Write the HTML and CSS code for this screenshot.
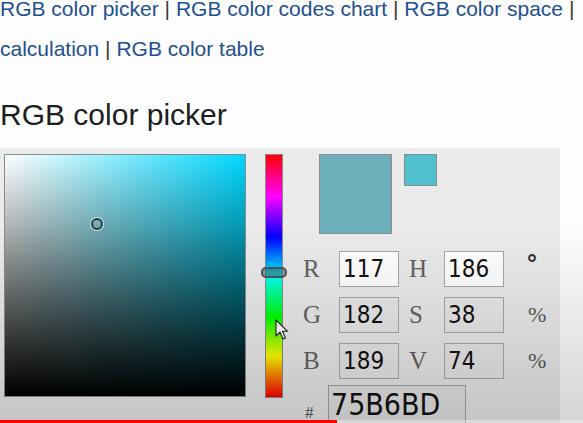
FILE: index.html
```html
<!DOCTYPE html>
<html lang="en">
<head>
<meta charset="utf-8">
<title>RGB color picker</title>
<link rel="stylesheet" href="styles.css">
</head>
<body>
<nav class="links">
  <p class="links-line"><a href="#">RGB color picker</a> <span class="sep">|</span> <a href="#">RGB color codes chart</a> <span class="sep">|</span> <a href="#">RGB color space</a> <span class="sep">|</span></p>
  <p class="links-line"><a href="#">calculation</a> <span class="sep">|</span> <a href="#">RGB color table</a></p>
</nav>
<h1 class="title">RGB color picker</h1>
<div class="picker">
  <div class="sv"><span class="sv-marker"></span></div>
  <div class="hue"><span class="hue-thumb"></span></div>
  <div class="controls">
    <div class="swatches">
      <div class="swatch swatch-new"></div>
      <div class="swatch swatch-old"></div>
    </div>
    <div class="fields">
      <span class="lbl">R</span><div class="inp inp-active">117</div><span class="lbl lbl2">H</span><div class="inp inp-active">186</div><span class="unit unit-deg">°</span>
      <span class="lbl">G</span><div class="inp">182</div><span class="lbl lbl2">S</span><div class="inp">38</div><span class="unit">%</span>
      <span class="lbl">B</span><div class="inp">189</div><span class="lbl lbl2">V</span><div class="inp">74</div><span class="unit">%</span>
    </div>
    <div class="hex-row">
      <span class="hash">#</span>
      <div class="hex-inp">75B6BD</div>
    </div>
  </div>
</div>
<svg class="cursor" width="14" height="22" viewBox="0 0 14 22" aria-hidden="true">
  <path d="M1 1 L1 17 L5 13.2 L8 20 L10.4 19 L7.5 12.3 L12.6 12.3 Z" fill="#fff" stroke="#222" stroke-width="1.1" stroke-linejoin="round"/>
</svg>
<div class="shade"></div>
<div class="progress"><div class="played"></div></div>
</body>
</html>
```
FILE: styles.css
```css
html, body {
  margin: 0;
  padding: 0;
}
body {
  width: 583px;
  height: 423px;
  overflow: hidden;
  position: relative;
  background: #fdfdfd;
  font-family: "Liberation Sans", Arial, sans-serif;
}
.links {
  margin-top: -11px;
  font-size: 21px;
  line-height: 40px;
}
.links-line {
  margin: 0;
  white-space: nowrap;
}
.links a {
  color: #22508f;
  text-decoration: none;
}
.sep {
  color: #3d3a36;
}
.title {
  margin: 28px 0 0 0;
  font-size: 30px;
  line-height: 36px;
  font-weight: normal;
  color: #1e1e1e;
}
.picker {
  margin-top: 15px;
  width: 560px;
  height: 290px;
  background: #ebebeb;
  display: flex;
  align-items: flex-start;
  padding: 6px 0 0 4px;
  box-sizing: border-box;
}
.sv {
  position: relative;
  width: 240px;
  height: 241px;
  border: 1px solid #8a8a8a;
  background:
    linear-gradient(to top, #000 0%, rgba(0,0,0,0) 100%),
    linear-gradient(to right, #fff 0%, #00d8ff 100%);
  flex: none;
}
.sv-marker {
  position: absolute;
  left: 86px;
  top: 63px;
  width: 8px;
  height: 8px;
  border: 2px solid #2f3a3e;
  border-radius: 50%;
  box-shadow: 0 0 0 1px rgba(255,255,255,0.7);
}
.hue {
  position: relative;
  margin-left: 19px;
  width: 16px;
  height: 242px;
  border: 1px solid #8a8a8a;
  background: linear-gradient(to bottom,
    #ff0000 0%, #ff00ff 17%, #0000ff 34%, #00ffff 50%,
    #00ff00 67%, #ffff00 83%, #ff0000 100%);
  flex: none;
}
.hue-thumb {
  position: absolute;
  left: -5px;
  top: 112px;
  width: 22px;
  height: 7px;
  border: 2px solid #4e5557;
  border-radius: 5px;
  background: rgba(70,100,100,0.55);
}
.controls {
  margin-left: 20px;
  display: flex;
  flex-direction: column;
}
.swatches {
  display: flex;
  align-items: flex-start;
  margin-left: 16px;
  gap: 12px;
}
.swatch {
  border: 1px solid #8c8c8c;
  box-sizing: border-box;
}
.swatch-new {
  width: 73px;
  height: 80px;
  background: #6cafbb;
}
.swatch-old {
  width: 33px;
  height: 32px;
  background: #52c1cf;
}
.fields {
  margin-top: 17px;
  display: grid;
  grid-template-columns: 36px 60px 45px 60px 40px;
  grid-auto-rows: 36px;
  row-gap: 10px;
  align-items: center;
}
.lbl {
  font-family: "Liberation Serif", "Times New Roman", serif;
  font-size: 25px;
  color: #636363;
  line-height: 36px;
}
.lbl2 {
  padding-left: 10px;
}
.inp {
  height: 36px;
  box-sizing: border-box;
  border: 1px solid #a9a9a9;
  background: #e9e9e9;
  font-family: "DejaVu Sans Condensed", "DejaVu Sans", sans-serif;
  font-size: 24px;
  line-height: 34px;
  padding-left: 3px;
  color: #111;
}
.inp-active {
  background: #fff;
}
.unit {
  padding-left: 24px;
  font-family: "Liberation Serif", serif;
  font-size: 22px;
  color: #5a5a5a;
  line-height: 36px;
}
.unit-deg {
  padding-left: 22px;
  font-family: "DejaVu Sans", sans-serif;
  font-size: 24px;
  font-weight: bold;
  align-self: start;
  line-height: 28px;
  color: #333;
}
.hex-row {
  margin-top: 6px;
  display: flex;
  align-items: flex-end;
}
.hash {
  margin-left: 2px;
  width: 23px;
  font-family: "Liberation Serif", serif;
  font-size: 17px;
  color: #555;
  line-height: 20px;
  padding-bottom: 2px;
}
.hex-inp {
  width: 138px;
  height: 40px;
  box-sizing: border-box;
  border: 1px solid #a3a3a3;
  background: #e6e6e6;
  font-family: "DejaVu Sans Condensed", "DejaVu Sans", sans-serif;
  font-size: 30px;
  line-height: 38px;
  padding-left: 2px;
  color: #111;
}
.cursor {
  position: absolute;
  left: 275px;
  top: 319px;
}
.shade {
  position: absolute;
  left: 0;
  right: 0;
  bottom: 0;
  height: 200px;
  background: linear-gradient(to bottom, rgba(0,0,0,0) 0%, rgba(0,0,0,0.16) 100%);
  pointer-events: none;
}
.progress {
  position: absolute;
  left: 0;
  right: 0;
  bottom: 0;
  height: 3px;
  background: rgba(255,255,255,0.35);
}
.played {
  width: 337px;
  height: 3px;
  background: #ff0000;
}
```
